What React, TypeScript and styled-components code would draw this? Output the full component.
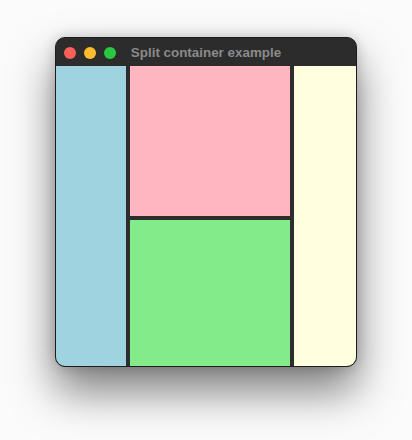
import React from "react";
import styled, { createGlobalStyle } from "styled-components";

const Global = createGlobalStyle`
  html, body { margin: 0; padding: 0; background: #ffffff; }
  body { font-family: "Liberation Sans", Arial, sans-serif; }
`;

const Page = styled.div`
  width: 412px;
  height: 440px;
  display: flex;
  justify-content: center;
  align-items: flex-start;
  padding-top: 37px;
  box-sizing: border-box;
  background: #fbfbfb;
`;

const Window = styled.div`
  width: 302px;
  height: 330px;
  box-sizing: border-box;
  border: 1px solid #1c1c1c;
  border-radius: 10px;
  overflow: hidden;
  display: flex;
  flex-direction: column;
  background: #2d2d2d;
  box-shadow: 0 24px 44px rgba(0, 0, 0, 0.5), 0 0 14px rgba(0, 0, 0, 0.18);
`;

const TitleBar = styled.div`
  height: 28px;
  flex: none;
  position: relative;
  display: flex;
  align-items: center;
  justify-content: center;
  background: #2c2c2c;
`;

const Lights = styled.div`
  position: absolute;
  left: 8px;
  top: 9px;
  display: flex;
  gap: 8px;
`;

const Light = styled.span<{ $c: string }>`
  width: 12px;
  height: 12px;
  border-radius: 50%;
  background: ${(p) => p.$c};
`;

const Title = styled.span`
  font-size: 13.4px;
  font-weight: 700;
  color: #8a8a8a;
  margin-top: 1px;
`;

const Content = styled.div`
  flex: 1;
  display: flex;
  gap: 4px;
  background: #2d2d2d;
`;

const Pane = styled.div<{ $bg: string; $w?: number; $h?: number }>`
  background: ${(p) => p.$bg};
  ${(p) => (p.$w ? `width: ${p.$w}px; flex: none;` : "flex: 1;")}
  ${(p) => (p.$h ? `height: ${p.$h}px; flex: none;` : "")}
`;

const Column = styled.div`
  width: 160px;
  flex: none;
  display: flex;
  flex-direction: column;
  gap: 4px;
`;

export default function App() {
  return (
    <>
      <Global />
      <Page>
        <Window>
          <TitleBar>
            <Lights>
              <Light $c="#fe5f57" />
              <Light $c="#febc2e" />
              <Light $c="#28c840" />
            </Lights>
            <Title>Split container example</Title>
          </TitleBar>
          <Content>
            <Pane $bg="#9fd3e0" $w={70} />
            <Column>
              <Pane $bg="#ffb6c1" $h={150} />
              <Pane $bg="#84eb8a" />
            </Column>
            <Pane $bg="#ffffe0" />
          </Content>
        </Window>
      </Page>
    </>
  );
}
